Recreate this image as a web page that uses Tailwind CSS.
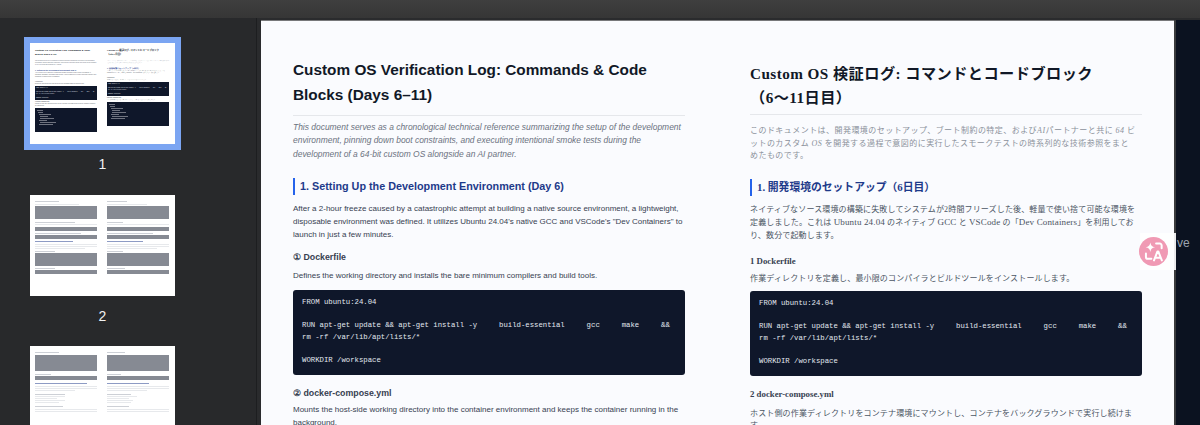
<!DOCTYPE html>
<html lang="en">
  <head>
    <meta charset="UTF-8" />
    <title>Custom OS Verification Log</title>
    <script src="https://cdn.jsdelivr.net/npm/@tailwindcss/browser@4"></script>
  </head>
  <body class="w-[1200px] h-[425px] overflow-hidden bg-[#28292b]">
    <div class="h-[18px] bg-gradient-to-b from-[#3f3f3f] to-[#363636]"></div>
    <div class="relative flex h-[407px] overflow-hidden">
      <!-- thumbnails -->
      <aside class="w-[257px] shrink-0 bg-[#28292b] border-r border-[#1d1e20] flex flex-col pl-[24px] pt-[19px]">
        <div class="w-[157px] h-[113px] bg-[#7ba5f2] p-[6px] shrink-0">
          <div class="w-[145px] h-[101px] bg-white overflow-hidden">
            <div class="flex gap-[10px] pt-[6px] px-[5px] text-[1.3px] leading-[2px] text-[#555b66] font-['Liberation_Sans',sans-serif]">
              <div class="w-[62px]">
                <p class="text-[2.4px] leading-[4px] font-bold text-[#111827]">Custom OS Verification Log: Commands &amp; Code Blocks (Days 6–11)</p>
                <p class="mt-[3px] italic text-[#6b7280]">This document serves as a chronological technical reference summarizing the setup of the development environment, pinning down boot constraints, and executing intentional smoke tests during the development of a 64-bit custom OS alongside an AI partner.</p>
                <p class="mt-[3px] text-[1.7px] font-bold text-[#1e3a8a]">1. Setting Up the Development Environment (Day 6)</p>
                <p class="mt-[1px]">After a 2-hour freeze caused by a catastrophic attempt at building a native source environment, a lightweight, disposable environment was defined. It utilizes Ubuntu 24.04's native GCC and VSCode's "Dev Containers" to launch in just a few minutes.</p>
                <p class="mt-[3px] font-bold">① Dockerfile</p>
                <p>Defines the working directory and installs the bare minimum compilers and build tools.</p>
                <pre class="mt-[1px] h-[14px] bg-[#0f172a] p-[1px] text-[1.16px] leading-[1.9px] text-[#e2e8f0] font-['Liberation_Mono',monospace] overflow-hidden">FROM ubuntu:24.04

RUN apt-get update &amp;&amp; apt-get install -y     build-essential     gcc     make     &amp;&amp;
rm -rf /var/lib/apt/lists/*

WORKDIR /workspace</pre>
                <p class="mt-[1px] font-bold">② docker-compose.yml</p>
                <p>Mounts the host-side working directory into the container environment and keeps the container running in the background.</p>
                <div class="mt-[1px] h-[24px] bg-[#0f172a] p-[1.500px] flex flex-col gap-[1px]">
                  <div class="w-[6px] h-[1px] bg-white/40"></div>
                  <div class="ml-[1px] w-[5px] h-[1px] bg-white/40"></div>
                  <div class="ml-[2px] w-[12px] h-[1px] bg-white/40"></div>
                  <div class="ml-[3px] w-[8px] h-[1px] bg-white/40"></div>
                  <div class="ml-[3px] w-[14px] h-[1px] bg-white/40"></div>
                  <div class="ml-[2px] w-[8px] h-[1px] bg-white/40"></div>
                  <div class="ml-[3px] w-[16px] h-[1px] bg-white/40"></div>
                  <div class="ml-[2px] w-[14px] h-[1px] bg-white/40"></div>
                </div>
              </div>
              <div class="w-[62px]">
                <p class="text-[2.4px] leading-[4px] font-bold text-[#111827] font-['Liberation_Serif','Noto_Sans_CJK_JP',serif]">Custom OS 検証ログ: コマンドとコードブロック<br />（6〜11日目）</p>
                <p class="mt-[3px] text-[#9ca3af]">このドキュメントは、開発環境のセットアップ、ブート制約の特定、およびAIパートナーと共に64ビットのカスタムOSを開発する過程で意図的に実行したスモークテストの時系列的な技術参照をまとめたものです。</p>
                <p class="mt-[3px] text-[1.7px] font-bold text-[#1e3a8a]">1. 開発環境のセットアップ（6日目）</p>
                <p class="mt-[1px]">ネイティブなソース環境の構築に失敗してシステムが2時間フリーズした後、軽量で使い捨て可能な環境を定義しました。これは Ubuntu 24.04 のネイティブ GCC と VSCode の「Dev Containers」を利用しており、数分で起動します。</p>
                <p class="mt-[3px] font-bold">1 Dockerfile</p>
                <p>作業ディレクトリを定義し、最小限のコンパイラとビルドツールをインストールします。</p>
                <pre class="mt-[1px] h-[14px] bg-[#0f172a] p-[1px] text-[1.16px] leading-[1.9px] text-[#e2e8f0] font-['Liberation_Mono',monospace] overflow-hidden">FROM ubuntu:24.04

RUN apt-get update &amp;&amp; apt-get install -y     build-essential     gcc     make     &amp;&amp;
rm -rf /var/lib/apt/lists/*

WORKDIR /workspace</pre>
                <p class="mt-[1px] font-bold">2 docker-compose.yml</p>
                <p>ホスト側の作業ディレクトリをコンテナ環境にマウントし、コンテナをバックグラウンドで実行し続けます。</p>
                <div class="mt-[1px] h-[24px] bg-[#0f172a] p-[1.500px] flex flex-col gap-[1px]">
                  <div class="w-[6px] h-[1px] bg-white/40"></div>
                  <div class="ml-[1px] w-[5px] h-[1px] bg-white/40"></div>
                  <div class="ml-[2px] w-[12px] h-[1px] bg-white/40"></div>
                  <div class="ml-[3px] w-[8px] h-[1px] bg-white/40"></div>
                  <div class="ml-[3px] w-[14px] h-[1px] bg-white/40"></div>
                  <div class="ml-[2px] w-[8px] h-[1px] bg-white/40"></div>
                  <div class="ml-[3px] w-[16px] h-[1px] bg-white/40"></div>
                  <div class="ml-[2px] w-[14px] h-[1px] bg-white/40"></div>
                </div>
              </div>
            </div>
          </div>
        </div>
        <p class="w-[157px] mt-[6px] text-center text-[14px] leading-[16px] text-[#f2f2f2] font-['Liberation_Sans',sans-serif]">1</p>

        <div class="ml-[6px] mt-[23px] w-[145px] h-[101px] shrink-0 bg-white">
          <div class="flex gap-[10px] pt-[6px] px-[5px] opacity-50">
            <div class="w-[62px] flex flex-col">
              <div class="w-[24px] h-[1px] bg-[#9ca3af]"></div>
              <div class="mt-[2px] w-[44px] h-[1px] bg-[#d1d5db]"></div>
              <div class="mt-[1px] h-[13px] bg-[#0f172a]"></div>
              <div class="mt-[3px] w-[40px] h-[1px] bg-[#9ca3af]"></div>
              <div class="mt-[1px] h-[1px] bg-[#d1d5db]"></div>
              <div class="mt-[2px] h-[4px] bg-[#0f172a]"></div>
              <div class="mt-[2px] w-[46px] h-[1px] bg-[#9ca3af]"></div>
              <div class="mt-[1px] h-[4px] bg-[#0f172a]"></div>
              <div class="mt-[2px] w-[38px] h-[1px] bg-[#1e3a8a]"></div>
              <div class="mt-[2px] h-[1px] bg-[#d1d5db]"></div>
              <div class="mt-[1px] h-[1px] bg-[#d1d5db]"></div>
              <div class="mt-[1px] w-[50px] h-[1px] bg-[#d1d5db]"></div>
              <div class="mt-[2px] w-[20px] h-[1px] bg-[#9ca3af]"></div>
              <div class="mt-[1px] h-[13px] bg-[#0f172a]"></div>
              <div class="mt-[2px] w-[20px] h-[1px] bg-[#9ca3af]"></div>
              <div class="mt-[1px] h-[4px] bg-[#0f172a]"></div>
            </div>
            <div class="w-[62px] flex flex-col">
              <div class="w-[20px] h-[1px] bg-[#9ca3af]"></div>
              <div class="mt-[2px] w-[40px] h-[1px] bg-[#d1d5db]"></div>
              <div class="mt-[1px] h-[13px] bg-[#0f172a]"></div>
              <div class="mt-[3px] w-[16px] h-[1px] bg-[#9ca3af]"></div>
              <div class="mt-[1px] h-[1px] bg-[#d1d5db]"></div>
              <div class="mt-[2px] h-[4px] bg-[#0f172a]"></div>
              <div class="mt-[2px] w-[46px] h-[1px] bg-[#9ca3af]"></div>
              <div class="mt-[1px] h-[4px] bg-[#0f172a]"></div>
              <div class="mt-[2px] w-[36px] h-[1px] bg-[#1e3a8a]"></div>
              <div class="mt-[2px] h-[1px] bg-[#d1d5db]"></div>
              <div class="mt-[1px] h-[1px] bg-[#d1d5db]"></div>
              <div class="mt-[1px] w-[50px] h-[1px] bg-[#d1d5db]"></div>
              <div class="mt-[2px] w-[16px] h-[1px] bg-[#9ca3af]"></div>
              <div class="mt-[1px] h-[13px] bg-[#0f172a]"></div>
              <div class="mt-[2px] w-[18px] h-[1px] bg-[#9ca3af]"></div>
              <div class="mt-[1px] h-[4px] bg-[#0f172a]"></div>
            </div>
          </div>
        </div>
        <p class="w-[157px] mt-[12px] text-center text-[14px] leading-[16px] text-[#f2f2f2] font-['Liberation_Sans',sans-serif]">2</p>

        <div class="ml-[6px] mt-[22px] w-[145px] h-[101px] shrink-0 bg-white">
          <div class="flex gap-[10px] pt-[6px] px-[5px] opacity-50">
            <div class="w-[62px] flex flex-col">
              <div class="w-[24px] h-[1px] bg-[#9ca3af]"></div>
              <div class="mt-[2px] h-[16px] bg-[#0f172a]"></div>
              <div class="mt-[3px] w-[16px] h-[1px] bg-[#9ca3af]"></div>
              <div class="mt-[1px] h-[4px] bg-[#0f172a]"></div>
              <div class="mt-[3px] w-[52px] h-[1px] bg-[#1e3a8a]"></div>
              <div class="mt-[2px] h-[1px] bg-[#d1d5db]"></div>
              <div class="mt-[1px] h-[1px] bg-[#d1d5db]"></div>
              <div class="mt-[1px] w-[40px] h-[1px] bg-[#d1d5db]"></div>
              <div class="mt-[3px] w-[30px] h-[1px] bg-[#9ca3af]"></div>
              <div class="mt-[1px] w-[30px] h-[1px] bg-[#d1d5db]"></div>
              <div class="mt-[1px] w-[22px] h-[1px] bg-[#d1d5db]"></div>
              <div class="mt-[1px] w-[30px] h-[1px] bg-[#d1d5db]"></div>
              <div class="mt-[1px] w-[24px] h-[1px] bg-[#d1d5db]"></div>
              <div class="mt-[3px] w-[28px] h-[1px] bg-[#9ca3af]"></div>
              <div class="mt-[2px] h-[1px] bg-[#d1d5db]"></div>
              <div class="mt-[1px] h-[1px] bg-[#d1d5db]"></div>
            </div>
            <div class="w-[62px] flex flex-col">
              <div class="w-[18px] h-[1px] bg-[#9ca3af]"></div>
              <div class="mt-[2px] h-[16px] bg-[#0f172a]"></div>
              <div class="mt-[3px] w-[14px] h-[1px] bg-[#9ca3af]"></div>
              <div class="mt-[1px] h-[4px] bg-[#0f172a]"></div>
              <div class="mt-[3px] w-[42px] h-[1px] bg-[#1e3a8a]"></div>
              <div class="mt-[2px] h-[1px] bg-[#d1d5db]"></div>
              <div class="mt-[1px] h-[1px] bg-[#d1d5db]"></div>
              <div class="mt-[1px] w-[40px] h-[1px] bg-[#d1d5db]"></div>
              <div class="mt-[3px] w-[24px] h-[1px] bg-[#9ca3af]"></div>
              <div class="mt-[1px] w-[30px] h-[1px] bg-[#d1d5db]"></div>
              <div class="mt-[1px] w-[22px] h-[1px] bg-[#d1d5db]"></div>
              <div class="mt-[1px] w-[26px] h-[1px] bg-[#d1d5db]"></div>
              <div class="mt-[1px] w-[24px] h-[1px] bg-[#d1d5db]"></div>
              <div class="mt-[3px] w-[22px] h-[1px] bg-[#9ca3af]"></div>
              <div class="mt-[2px] h-[1px] bg-[#d1d5db]"></div>
              <div class="mt-[1px] h-[1px] bg-[#d1d5db]"></div>
            </div>
          </div>
        </div>
      </aside>

      <!-- page -->
      <main class="flex-1 min-w-0 bg-[#2a2b2d] pl-[4px] pt-[2px] flex">
        <div class="w-[913px] shrink-0 h-[500px] bg-[#fafbfe] border-t border-[#77787a] flex gap-[65px] pl-[32px] pt-[36px] font-['Liberation_Sans',sans-serif]">
          <section class="w-[392px] shrink-0">
            <h1 class="text-[15.35px] leading-[25px] font-bold text-[#111827]">Custom OS Verification Log: Commands &amp; Code Blocks (Days 6–11)</h1>
            <div class="mt-[8px] border-t border-[#e5e7eb]"></div>
            <p class="mt-[5px] text-[8.45px] leading-[13.400px] italic text-[#6b7280]">This document serves as a chronological technical reference summarizing the setup of the development environment, pinning down boot constraints, and executing intentional smoke tests during the development of a 64-bit custom OS alongside an AI partner.</p>
            <h2 class="mt-[17px] border-l-2 border-[#2563eb] pl-[5px] text-[10.8px] leading-[17px] font-bold text-[#1e3a8a]">1. Setting Up the Development Environment (Day 6)</h2>
            <p class="mt-[8px] text-[8px] leading-[12.700px] text-[#374151]">After a 2-hour freeze caused by a catastrophic attempt at building a native source environment, a lightweight, disposable environment was defined. It utilizes Ubuntu 24.04's native GCC and VSCode's "Dev Containers" to launch in just a few minutes.</p>
            <h3 class="mt-[9px] text-[8.8px] leading-[14px] font-bold text-[#374151]">① Dockerfile</h3>
            <p class="mt-[5px] text-[8px] leading-[13px] text-[#374151]">Defines the working directory and installs the bare minimum compilers and build tools.</p>
            <pre class="mt-[8px] h-[85px] rounded-[3px] bg-[#0f172a] px-[9px] py-[7px] text-[7.3px] leading-[11.500px] text-[#e2e8f0] font-['Liberation_Mono',monospace] overflow-hidden">FROM ubuntu:24.04

RUN apt-get update &amp;&amp; apt-get install -y     build-essential     gcc     make     &amp;&amp;
rm -rf /var/lib/apt/lists/*

WORKDIR /workspace</pre>
            <h3 class="mt-[11px] text-[8.8px] leading-[14px] font-bold text-[#374151]">② docker-compose.yml</h3>
            <p class="mt-[4px] text-[8px] leading-[12.700px] text-[#374151]">Mounts the host-side working directory into the container environment and keeps the container running in the background.</p>
          </section>

          <section class="w-[392px] shrink-0 font-['Liberation_Serif','Noto_Sans_CJK_JP',serif]">
            <h1 class="text-[15.2px] leading-[24px] tracking-[0.45px] font-bold text-[#111827] pt-[5px]">Custom OS 検証ログ: コマンドとコードブロック<br />（6〜11日目）</h1>
            <div class="mt-[4px] border-t border-[#e5e7eb]"></div>
            <p class="mt-[10px] text-[8px] leading-[12.700px] tracking-[0.45px] text-[#8b919b]">このドキュメントは、開発環境のセットアップ、ブート制約の特定、および<em>AI</em>パートナーと共に <em>64</em> ビットのカスタム <em>OS</em> を開発する過程で意図的に実行したスモークテストの時系列的な技術参照をまと<br />めたものです。</p>
            <h2 class="mt-[16px] border-l-2 border-[#2563eb] pl-[5px] text-[10.8px] leading-[17px] font-bold text-[#1e3a8a]">1. 開発環境のセットアップ（6日目）</h2>
            <p class="mt-[8px] text-[8px] leading-[12.700px] tracking-[0.15px] text-[#4b5563]">ネイティブなソース環境の構築に失敗してシステムが2時間フリーズした後、軽量で使い捨て可能な環境を定義しました。これは <span class="text-[9px] leading-none">Ubuntu 24.04</span> のネイティブ <span class="text-[9px] leading-none">GCC</span> と <span class="text-[9px] leading-none">VSCode</span> の「<span class="text-[9px] leading-none">Dev Containers</span>」を利用してお<br />り、数分で起動します。</p>
            <h3 class="mt-[12px] text-[8.8px] leading-[14px] font-bold text-[#374151]">1 Dockerfile</h3>
            <p class="mt-[4px] text-[8px] leading-[13px] tracking-[0.15px] text-[#4b5563]">作業ディレクトリを定義し、最小限のコンパイラとビルドツールをインストールします。</p>
            <pre class="mt-[6px] h-[85px] rounded-[3px] bg-[#0f172a] px-[9px] py-[7px] text-[7.3px] leading-[11.500px] text-[#e2e8f0] font-['Liberation_Mono',monospace] overflow-hidden">FROM ubuntu:24.04

RUN apt-get update &amp;&amp; apt-get install -y     build-essential     gcc     make     &amp;&amp;
rm -rf /var/lib/apt/lists/*

WORKDIR /workspace</pre>
            <h3 class="mt-[11px] text-[8.8px] leading-[14px] font-bold text-[#374151]">2 docker-compose.yml</h3>
            <p class="mt-[7px] text-[8px] leading-[12px] tracking-[0.15px] text-[#4b5563]">ホスト側の作業ディレクトリをコンテナ環境にマウントし、コンテナをバックグラウンドで実行し続けます。</p>
          </section>
        </div>
        <div class="flex-1 bg-[#0b1220] border-l-[2px] border-[#3a3b3d] pt-[216px] pl-[1px] text-[12px] leading-[14px] text-[#9ca3af] font-['Liberation_Sans',sans-serif]">ve</div>
      </main>

      <!-- translate button -->
      <div class="absolute left-[1140px] top-[215px] w-[36px] h-[37px] bg-white/90 flex items-center">
        <div class="-ml-[1px] w-[29px] h-[29px] shrink-0 rounded-full bg-[#f09ab4] flex items-center justify-center">
          <svg width="22" height="22" viewBox="0 0 21 21" fill="none" stroke="#fff" stroke-width="1.9" stroke-linecap="round" stroke-linejoin="round">
            <path d="M7 1.500c.6 3 1.500 3.900 4.500 4.500-3 .6-3.900 1.500-4.500 4.500-.6-3-1.500-3.900-4.500-4.500 3-.6 3.900-1.500 4.500-4.500z" fill="#fff" stroke="none" />
            <path d="M12.500 2.500h3.500a1.800 1.800 0 0 1 1.800 1.800V7" />
            <path d="M2.800 12v3.200A1.800 1.800 0 0 0 4.600 17H8" />
            <path d="M10.500 18.500l3.300-8.500h.8l3.400 8.500M11.800 16h5.200" />
          </svg>
        </div>
      </div>
    </div>
  </body>
</html>
